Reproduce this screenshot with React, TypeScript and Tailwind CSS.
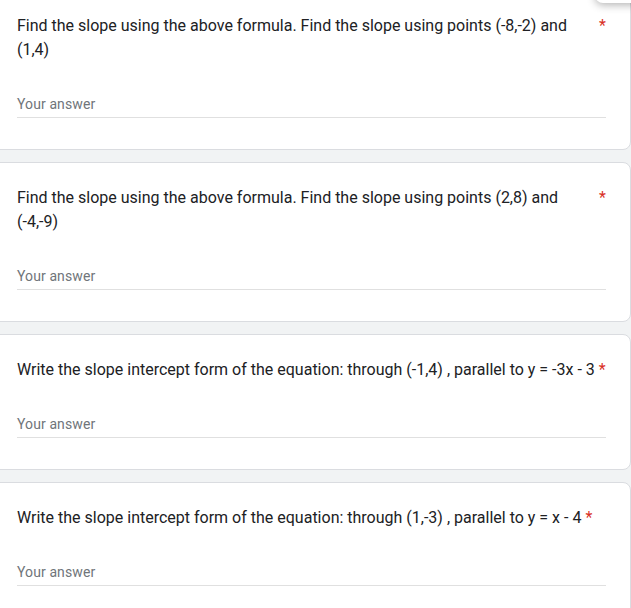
import React from "react";

type Question = {
  id: number;
  title: string;
};

const questions: Question[] = [
  {
    id: 1,
    title: "Find the slope using the above formula. Find the slope using points (-8,-2) and (1,4)",
  },
  {
    id: 2,
    title: "Find the slope using the above formula. Find the slope using points (2,8) and (-4,-9)",
  },
  {
    id: 3,
    title: "Write the slope intercept form of the equation: through (-1,4) , parallel to y = -3x - 3",
  },
  {
    id: 4,
    title: "Write the slope intercept form of the equation: through (1,-3) , parallel to y = x - 4",
  },
];

const QuestionCard = ({ question }: { question: Question }) => {
  return (
    <div className="w-[639px] -ml-[8px] bg-white border border-[#dadce0] rounded-lg pl-6 pr-6 pt-[23px] pb-[31px]">
      <div className="flex items-start">
        <div className="text-[16px] leading-6 text-[#202124]">{question.title}</div>
        <span className="pl-1 text-[16px] leading-6 text-[#d93025] shrink-0">*</span>
      </div>
      <div className="mt-8 border-b border-[#e0e0e0] pb-[3px]">
        <div className="text-[14px] leading-5 text-[#70757a] tracking-[0.1px]">Your answer</div>
      </div>
    </div>
  );
};

export default function App() {
  return (
    <div
      className="relative w-[631px] h-[608px] overflow-hidden bg-[#f1f3f4]"
      style={{ fontFamily: "Roboto, 'Liberation Sans', sans-serif" }}
    >
      <div className="flex flex-col gap-3 -mt-[10px]">
        {questions.map((q) => (
          <QuestionCard key={q.id} question={q} />
        ))}
      </div>
      {/* floating toolbar peeking in at the top right */}
      <div className="absolute -top-[40px] -right-[12px] w-[48px] h-[43px] rounded-lg bg-white shadow-[0_2px_8px_rgba(0,0,0,0.3)]" />
    </div>
  );
}
